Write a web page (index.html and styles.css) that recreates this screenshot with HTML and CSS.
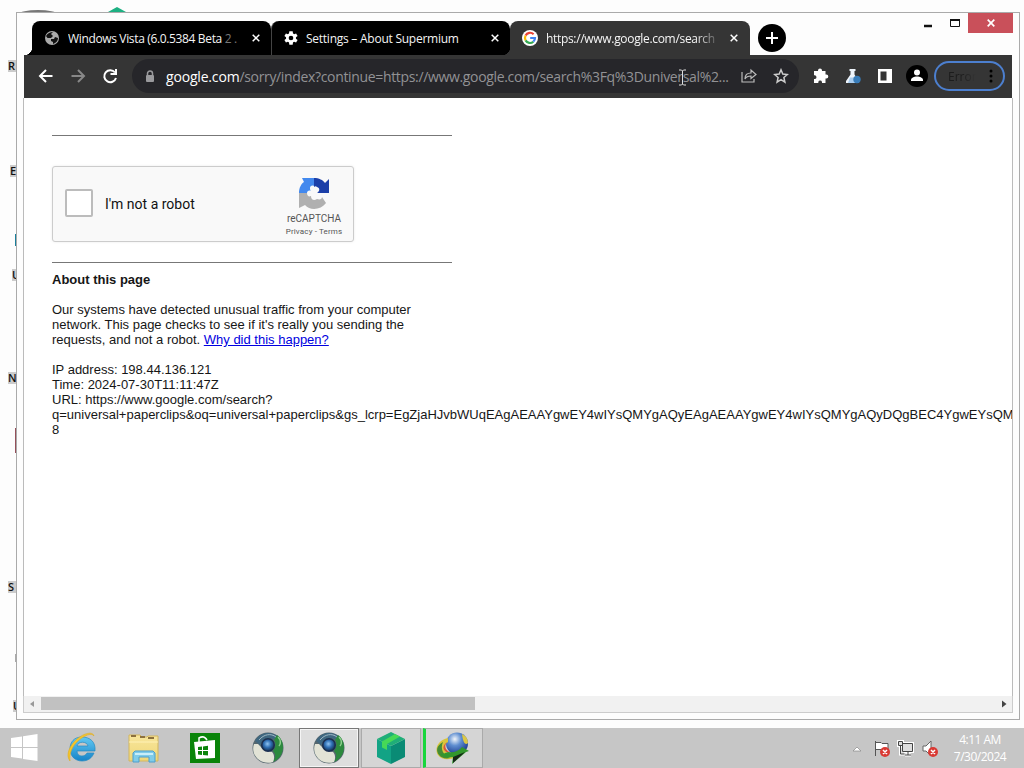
FILE: index.html
```
<!DOCTYPE html>
<html lang="en">

<head>
    <meta charset="utf-8">
    <title>https://www.google.com/search</title>
    <link rel="stylesheet" href="styles.css">
</head>

<body>
<div id="desktop">
    <!-- desktop icons behind the window -->
    <svg class="wallpaper" width="1024" height="728">
        <ellipse cx="38" cy="14" rx="19" ry="4" fill="#777"/>
        <path d="M108 12l9-5 9 5v3h-18z" fill="#1db082"/>
        <path d="M15 234h2v12h-2z" fill="#197f9b"/>
        <path d="M15 428h2v25h-2z" fill="#95505a"/>
        <path d="M15 654h2v8h-2z" fill="#aaa"/>
    </svg>
    <span class="label l1">R</span>
    <span class="label l2">E</span>
    <span class="label l3">U</span>
    <span class="label l4">N</span>
    <span class="label l5">S</span>
    <span class="label l6">U</span>

    <div class="window">
        <div class="titlebar">
            <div class="tabs">
                <div class="tab">
                    <svg class="favicon" width="16" height="16" viewBox="0 0 16 16"><circle cx="8" cy="8" r="7" fill="#aaa"/><path d="M2 6c2-3 4-4 7-4L7 4l2 2-2 2H3.500zM7 9h3l1-2 3 1c0 3-2 5-5 6v-2L7 11z" fill="#111"/></svg>
                    <span class="tab-title t1">Windows Vista (6.0.5384 Beta <i>2 .</i></span>
                    <svg class="close" width="8" height="8" viewBox="0 0 8 8"><path d="M.7.7l6.600 6.600M7.300.7L.7 7.300"/></svg>
                </div>
                <div class="tab second">
                    <svg class="favicon" width="16" height="16" viewBox="0 0 24 24"><path fill="#fff" d="M19.400 13a7.500 7.500 0 0 0 0-2l2.500-1.900-2.300-4-2.900 1.200a7 7 0 0 0-1.700-1L14.500 2h-5L9 5.300a7 7 0 0 0-1.700 1L4.400 5.100l-2.300 4L4.600 11a7.500 7.500 0 0 0 0 2l-2.500 1.900 2.300 4 2.900-1.200a7 7 0 0 0 1.700 1l.5 3.300h5l.5-3.300a7 7 0 0 0 1.700-1l2.900 1.200 2.300-4zM12 15.500a3.500 3.500 0 1 1 0-7 3.500 3.500 0 0 1 0 7z"/></svg>
                    <span class="tab-title t2">Settings – About Supermium</span>
                    <svg class="close" width="8" height="8" viewBox="0 0 8 8"><path d="M.7.7l6.600 6.600M7.300.7L.7 7.300"/></svg>
                </div>
                <div class="tab active">
                    <svg class="favicon" width="16" height="16" viewBox="0 0 16 16"><circle cx="8" cy="8" r="8" fill="#fff"/><g fill="none" stroke-width="2.200"><path d="M11.600 4.200A5 5 0 0 0 3.600 5.600" stroke="#ea4335"/><path d="M3.600 5.600a5 5 0 0 0 0 4.800" stroke="#fbbc05"/><path d="M3.600 10.400a5 5 0 0 0 7.700 1.300" stroke="#34a853"/><path d="M11.300 11.700A5 5 0 0 0 13 8H8.200" stroke="#4285f4"/></g></svg>
                    <span class="tab-title t3">https://www.google.com/search</span>
                    <svg class="close" width="8" height="8" viewBox="0 0 8 8"><path d="M.7.7l6.600 6.600M7.300.7L.7 7.300"/></svg>
                </div>
            </div>
            <div class="newtab"><svg width="12" height="12"><path d="M6 0v12M0 6h12" stroke="#fff" stroke-width="2"/></svg></div>
            <div class="controls">
                <svg width="58" height="20"><path d="M14 13h8" stroke="#111" stroke-width="2.500"/><path d="M40.500 7.500h9v6h-9z" fill="none" stroke="#111"/><path d="M40 7h10" stroke="#111" stroke-width="2"/></svg>
                <div class="win-close"><svg width="8" height="8"><path d="M.7.7l6.600 6.600M7.300.7L.7 7.300" stroke="#fff" stroke-width="1.700"/></svg></div>
            </div>
        </div>

        <div class="toolbar">
            <svg class="nav" width="108" height="32" fill="none" stroke-width="2">
                <path d="M28.500 15h-12M22 9l-6 6 6 6" stroke="#fff"/>
                <path d="M47.500 15h12M54 9l6 6-6 6" stroke="#888"/>
                <path d="M91 11.500a6 6 0 1 0 1 5.500M92 8v5h-5.500" stroke="#fff"/>
            </svg>
            <div class="omnibox">
                <svg class="lock" width="10" height="13"><path d="M2.500 5V3.500a2.500 2.500 0 0 1 5 0V5" fill="none" stroke="#9a9a9d" stroke-width="1.500"/><rect x="1" y="5" width="8" height="7" rx="1" fill="#9a9a9d"/></svg>
                <div class="url"><b>google.com</b><span>/sorry/index?continue=https://www.google.com/search%3Fq%3Duniversal%2...</span></div>
                <svg class="share" width="16" height="16" viewBox="0 0 16 16" fill="none" stroke="#bbb" stroke-width="1.200"><path d="M1 4v10h12v-3M4 11c0-4 2-6 6-6V2l5 4.500-5 4V8c-3 0-5 1-6 3z"/></svg>
                <svg width="16" height="16" viewBox="0 0 16 16" fill="none" stroke="#ccc" stroke-width="1.500"><path d="M8 1.800l1.800 4.300 4.600.4-3.500 3 1 4.600L8 11.700l-3.900 2.400 1-4.600-3.500-3 4.600-.4z"/></svg>
            </div>
            <div class="actions">
                <svg width="16" height="16" viewBox="0 0 16 16"><path d="M5 2.500a2 2 0 0 1 4 0V3h3.500v3.500h.8a2 2 0 0 1 0 4h-.8V15H9v-1a1.900 1.900 0 0 0-3.700 0v1H1v-4h1a1.900 1.900 0 0 0 0-3.700H1V3h4z" fill="#fff"/></svg>
                <svg width="16" height="16" viewBox="0 0 16 16"><path d="M4.500 1h6v2h-1v3.500l4 6.500v2H1v-2l4.500-6.500V3h-1z" fill="#eef4fb"/><path d="M5 9.500h5l3.500 4V15H3z" fill="#a9cdf0"/><circle cx="12" cy="11.500" r="3.700" fill="#387cb9"/></svg>
                <svg width="16" height="16" viewBox="0 0 16 16"><path d="M1 1h14v14H1z" fill="#fff"/><path d="M3.500 3.500h6v9h-6z" fill="#333"/></svg>
                <svg class="avatar" width="22" height="22"><circle cx="11" cy="11" r="11" fill="#000"/><circle cx="11" cy="7.500" r="3" fill="#fff"/><path d="M5 16v-1c0-2 3-3.500 6-3.500s6 1.500 6 3.500v1z" fill="#fff"/></svg>
                <div class="error"><span>Error</span><svg width="4" height="14"><circle cx="2" cy="2" r="1.500"/><circle cx="2" cy="7" r="1.500"/><circle cx="2" cy="12" r="1.500"/></svg></div>
            </div>
        </div>

        <div class="page">
            <hr>
            <div class="captcha">
                <div class="checkbox"></div>
                <div class="robot">I'm not a robot</div>
                <div class="brand">
                    <svg width="32" height="32" viewBox="0 0 32 32">
                        <path d="M4 1h12v8c-2-1-4 0-4 2 0 1 0 2 1 3-2-1-4 0-4 2H1C1 11 3 7 6 5z" fill="#4389ee"/>
                        <path d="M16 1c5 0 9 2 11 5l4-4v14H19c3-2 3-5 0-6-1-1-2-1-3 0z" fill="#1c3fa8"/>
                        <path d="M1 16h8c0 3 2 4 4 3 0 4 3 5 6 3 3 1 5 0 5-2l4 6c-5 7-16 8-21 2l-6 3z" fill="#b0b0b0"/>
                    </svg>
                    <div class="name">reCAPTCHA</div>
                    <div class="terms">Privacy - Terms</div>
                </div>
            </div>
            <hr>
            <div class="text">
                <b>About this page</b><br><br>
                Our systems have detected unusual traffic from your computer<br>
                network. This page checks to see if it's really you sending the<br>
                requests, and not a robot. <a href="#">Why did this happen?</a><br><br>
                IP address: 198.44.136.121<br>
                Time: 2024-07-30T11:11:47Z<br>
                URL: https://www.google.com/search?<br>
                q=universal+paperclips&amp;oq=universal+paperclips&amp;gs_lcrp=EgZjaHJvbWUqEAgAEAAYgwEY4wIYsQMYgAQyEAgAEAAYgwEY4wIYsQMYgAQyDQgBEC4YgwEYsQM<br>
                8
            </div>
        </div>
        <div class="scrollbar">
            <svg width="17" height="16"><path d="M10 5v6L6 8z" fill="#999"/></svg>
            <div class="thumb"></div>
            <svg width="17" height="16"><path d="M7 4.500v7L11.500 8z" fill="#444"/></svg>
        </div>
    </div>

    <svg class="cursor" width="9" height="17"><path d="M1 1h2.500l1 1 1-1H8M4.500 2v13M1 16h2.500l1-1 1 1H8" fill="none" stroke="#ddd"/></svg>
</div>

<div id="taskbar">
    <svg width="0" height="0" class="defs">
        <defs>
            <radialGradient id="ball" cx=".45" cy=".4" r=".65"><stop offset="0" stop-color="#8fc4f2"/><stop offset=".5" stop-color="#2f6fb4"/><stop offset="1" stop-color="#143256"/></radialGradient>
            <radialGradient id="globe" cx=".4" cy=".3" r=".75"><stop offset="0" stop-color="#f2f6fb"/><stop offset=".4" stop-color="#5f8ed0"/><stop offset="1" stop-color="#16348a"/></radialGradient>
            <linearGradient id="ie" x2="0" y2="1"><stop offset="0" stop-color="#62c9f3"/><stop offset="1" stop-color="#1683c8"/></linearGradient>
            <linearGradient id="folder" x2="0" y2="1"><stop offset="0" stop-color="#f8e69c"/><stop offset="1" stop-color="#efd778"/></linearGradient>
            <symbol id="supermium" viewBox="0 0 32 32">
                <circle cx="16" cy="16" r="15.500" fill="#55676f"/>
                <path d="M3 9C8-1 21-1 26 5l-3 3c-6-4-12-2-15 5z" fill="#3f6780"/>
                <path d="M7 8c5-6 12-7 17-3" fill="none" stroke="#9db6c2"/>
                <path d="M25 3c9 6 8 22-4 27 3-5 3-8 0-11 3-4 3-8 1-11z" fill="#2c8a3e"/>
                <path d="M26 5c3 3 3 7 1 9" fill="none" stroke="#8fd08f" stroke-width="1.500"/>
                <path d="M2 12c-4 11 7 22 19 18 2-4 1-8-1-10l-8-2-6-6z" fill="#e2e3d6"/>
                <circle cx="16" cy="13" r="7" fill="#1b2f50"/>
                <circle cx="16" cy="13" r="5.500" fill="url(#ball)"/>
            </symbol>
        </defs>
    </svg>
    <div class="task start"><svg width="28" height="28" viewBox="0 0 28 28" fill="#fff"><path d="M1 4l11-1.500V13H1zM13 2.300L27.500 0v13H13zM1 14h11v10.500L1 23zM13 14h14.500v13L13 25z"/></svg></div>
    <div class="task"><svg width="32" height="32" viewBox="0 0 32 32"><path d="M17 5C9 5 5 10 5 17s5 12 12 12c6 0 10-3 12-8h-7c-1 2-3 3-5 3-3 0-5-2-5-5h18C31 10 25 5 17 5zm-5 9c1-5 10-5 11 0z" fill="url(#ie)" stroke="#258bc2" stroke-width=".7"/><path d="M5 29C0 23 5 13 12 7S28-1 29 4c-3-4-10 0-16 5S4 22 5 29z" fill="#f4c62c" stroke="#dfab22" stroke-width=".6"/></svg></div>
    <div class="task"><svg width="32" height="32" viewBox="0 0 32 32"><path d="M1 3h11l2 2h5l1-1h10v25H1z" fill="url(#folder)" stroke="#d3b65d"/><path d="M3 3h5v2H3zM12 4h5v2h-5zM20 5h6v2h-6z" fill="#8c713e"/><path d="M1 10h29" stroke="#fff2b5"/><path d="M5 30v-9l2-2h18l2 2v9h-6v-5H11v5z" fill="#80cce8" stroke="#4d9ecd"/><path d="M7 22h18" stroke="#c9eef9" stroke-width="2"/></svg></div>
    <div class="task store"><svg width="30" height="30" viewBox="0 0 30 30"><path d="M0 0h30v30H0z" fill="#098409"/><path d="M4 9l21-2v18L6 26z" fill="#fff"/><path d="M9 9V5q5-3 8 2" fill="none" stroke="#fff" stroke-width="1.500"/><path d="M8 14l4-.5V17H8zM13 13.400l5-.6V17h-5zM8 18h4v4l-4-.5zM13 18h5v4.500l-5-.5z" fill="#098409"/></svg></div>
    <div class="task"><svg width="32" height="32"><use href="#supermium"/></svg></div>
    <div class="task open current"><svg width="32" height="32"><use href="#supermium"/></svg></div>
    <div class="task open"><svg width="32" height="32" viewBox="0 0 32 32"><path d="M2 7l14 7v18L2 25z" fill="#12a385"/><path d="M30 7l-14 7v18l14-7z" fill="#0a8b75"/><path d="M2 7l14-7 14 7-14 7z" fill="#1fae78"/><path d="M7 9.500L20 2l5 2.500L12 12v6l-5-2.500z" fill="#46d957"/></svg></div>
    <div class="task open download"><svg width="34" height="32" viewBox="0 0 34 32"><circle cx="22" cy="11.500" r="11" fill="url(#globe)"/><path d="M27 2c4 2 6 5 6 9-3 3-5-1-6-9z" fill="#dcc845"/><path d="M13 6C3 8-1 17 3 23s14 5 19 1l-8-2c-7-3-6-9-1-12z" fill="#d8c53c"/><path d="M8 10c-7 4-7 9-4 13 2 3 7 4 11 3-7-3-10-9-7-16z" fill="#458c35"/><path d="M12 10c-3 4-2 8 4 11l-5-1c-4-3-3-7 1-10z" fill="#d95837"/><path d="M13 20c6 1 11-1 14-5l7 4-3 1-14 12 1-7c-5 1-10 0-13-3 3 0 5-1 8-2z" fill="#32972c"/><path d="M18 25l12-5-12 11z" fill="#172719"/></svg></div>
    <div class="tray">
        <svg width="88" height="20">
            <path d="M1 13l4-4 4 4z" fill="#fff" stroke="#888" stroke-width=".7"/>
            <path d="M23.500 3v15M24 4.500h5l1 1h6v7h-6l-1-1h-5" fill="#fff" stroke="#555"/>
            <path d="M50.500 5.500h10v8h-10zM53 17h6M56 14v3M46.500 3.500h4v4h-4zM48.500 8v8h4" fill="#ddd" stroke="#fff" stroke-width="3"/><path d="M50.500 5.500h10v8h-10zM53 17h6M56 14v3M46.500 3.500h4v4h-4zM48.500 8v8h4" fill="#ddd" stroke="#444"/>
            <path d="M71 8h3l5-5v15l-5-5h-3z" fill="#fff" stroke="#666"/>
            <g fill="#d93a34"><circle cx="33" cy="14" r="5"/><circle cx="81" cy="14" r="5"/></g>
            <path d="M31 12l4 4m0-4l-4 4M79 12l4 4m0-4l-4 4" stroke="#fff" stroke-width="1.500"/>
        </svg>
        <div class="clock">4:11 AM<br>7/30/2024</div>
    </div>
</div>
</body>

</html>
```
FILE: styles.css
```
* {
    box-sizing: border-box;
}

body {
    margin: 0;
    width: 1024px;
    height: 768px;
    overflow: hidden;
    background: #fdfdfd;
    font-family: "Open Sans", "Noto Sans", sans-serif;
}

svg {
    display: block;
    flex: none;
}

#desktop {
    position: relative;
    height: 728px;
}

.wallpaper {
    position: absolute;
}

/* the window lies over the right part of each label */
.label {
    position: absolute;
    left: 8px;
    font-size: 11px;
    font-weight: 600;
    line-height: 12px;
    padding-right: 3px;
    background: #ccc;
    color: #111;
}

.l1 { top: 60px; }
.l2 { top: 165px; left: 10px; }
.l3 { top: 269px; left: 12px; }
.l4 { top: 372px; }
.l5 { top: 581px; }
.l6 { top: 700px; left: 13px; }

.window {
    position: absolute;
    left: 16px;
    top: 12px;
    width: 1004px;
    height: 708px;
    padding: 0 7px 7px;
    border: 1px solid #aaa;
    background: #fdfdfd;
}

.titlebar {
    display: flex;
    height: 42px;
    padding-left: 8px;
    background: radial-gradient(circle at 0 0, transparent 8px, #000 8.5px) 0 34px / 8px 8px no-repeat;
}

.tabs {
    display: flex;
    margin-top: 8px;
}

.tab {
    display: flex;
    align-items: center;
    width: 239px;
    height: 34px;
    padding: 0 11px 0 12px;
    border-radius: 8px 8px 0 0;
    background: #000;
    color: #f5f5f5;
}

.tab.second {
    border-radius: 8px 8px 0 0;
    border-left: 1px solid #444;
    background: radial-gradient(circle at 0 0, #000 8px, #353535 8.5px) 100% 100% / 8px 8px no-repeat, #000;
    padding-left: 11px;
}

.tab.active {
    width: 240px;
    background: #353535;
    padding: 0 12px;
}

.tab-title {
    flex: 1;
    margin-left: 8px;
    overflow: hidden;
    white-space: nowrap;
    font-size: 12px;
}

.t1 { letter-spacing: -0.35px; }
.t1 i { font-style: normal; color: #777; }
.t2 { margin-left: 7px; letter-spacing: -0.25px; }

.t3 {
    letter-spacing: -0.32px;
    -webkit-mask-image: linear-gradient(90deg, #000 150px, transparent 175px);
    mask-image: linear-gradient(90deg, #000 150px, transparent 175px);
}

.close {
    margin-left: 8px;
    stroke: #fff;
    stroke-width: 1.5;
}

.newtab {
    display: flex;
    align-items: center;
    justify-content: center;
    width: 28px;
    height: 28px;
    margin: 11px 0 0 8px;
    border-radius: 50%;
    background: #000;
}

.controls {
    display: flex;
    margin-left: auto;
}

.win-close {
    display: flex;
    align-items: center;
    justify-content: center;
    width: 45px;
    height: 20px;
    margin-right: -1px;
    background: #c9505a;
}

.toolbar {
    display: flex;
    height: 43px;
    padding-top: 4px;
    background: #353535;
}

.nav {
    margin-top: 2px;
}

.omnibox {
    display: flex;
    align-items: center;
    width: 667px;
    height: 34px;
    padding: 0 10px 0 13px;
    border-radius: 17px;
    background: #26262a;
}

.url {
    width: 572px;
    margin-left: 11px;
    white-space: nowrap;
    font-size: 14px;
    letter-spacing: -0.34px;
    color: #929295;
}

.url b {
    font-weight: 400;
    color: #fff;
    letter-spacing: -0.18px;
}

.share {
    margin: 0 16px 0 4px;
}

.actions {
    display: flex;
    flex: 1;
    align-items: center;
    height: 34px;
    padding-left: 14px;
    gap: 16px;
}

.avatar {
    margin-left: -3px;
}

.error {
    display: flex;
    align-items: center;
    justify-content: space-between;
    width: 71px;
    height: 30px;
    margin-left: -10px;
    padding: 0 10px 0 12px;
    border: 2px solid #4c7fcf;
    border-radius: 15px;
    font-size: 12px;
    color: #1c1c1c;
}

.error span {
    -webkit-mask-image: linear-gradient(90deg, #000 14px, transparent 28px);
    mask-image: linear-gradient(90deg, #000 14px, transparent 28px);
}

.page {
    height: 598px;
    margin: 0 -1px;
    padding: 37px 0 0 28px;
    overflow: hidden;
    border: solid #bbb;
    border-width: 0 1px;
    background: #fff;
    font-family: "Liberation Sans", Arial, sans-serif;
}

hr {
    width: 400px;
    height: 1px;
    margin: 0;
    border: 0;
    background: #777;
}

.captcha {
    display: flex;
    width: 302px;
    height: 76px;
    margin: 30px 0 20px;
    padding-left: 12px;
    border: 1px solid #ccc;
    border-radius: 3px;
    background: #f9f9f9;
    box-shadow: 0 0 3px rgba(0, 0, 0, 0.08);
}

.checkbox {
    width: 28px;
    height: 28px;
    margin-top: 22px;
    border: 2px solid #bcbcbc;
    border-radius: 2px;
    background: #fff;
}

.robot {
    width: 175px;
    margin-left: 12px;
    padding-top: 28px;
    font: 14px/18px Roboto, sans-serif;
    color: #111;
}

.brand {
    display: flex;
    flex-direction: column;
    align-items: center;
    width: 68px;
    padding-top: 10px;
    white-space: nowrap;
    font-family: Roboto, sans-serif;
    color: #555;
}

.name {
    margin-top: 3px;
    font-size: 10px;
    line-height: 14px;
}

.terms {
    font-size: 8px;
    line-height: 11px;
    letter-spacing: 0.15px;
}

.text {
    margin-top: 9px;
    font-size: 13px;
    line-height: 15px;
    white-space: nowrap;
    color: #161616;
}

.text a {
    color: #0000e0;
}

.scrollbar {
    display: flex;
    justify-content: space-between;
    height: 17px;
    margin: 0 -1px;
    border: 1px solid #ccc;
    border-top: 0;
    background: #f1f1f1;
}

.thumb {
    width: 434px;
    height: 13px;
    margin: 1px auto 0 0;
    background: #c1c1c1;
}

.cursor {
    position: absolute;
    left: 678px;
    top: 69px;
}

#taskbar {
    position: relative;
    display: flex;
    height: 40px;
    padding-left: 10px;
    background: #c6c6c6;
}

.defs {
    position: absolute;
}

.task {
    display: flex;
    align-items: center;
    justify-content: center;
    width: 62px;
    height: 40px;
}

.start {
    width: 41px;
    justify-content: flex-start;
}

.start + .task {
    padding-right: 3px;
}

.store {
    padding-right: 2px;
}

.open {
    width: 60px;
    margin-right: 2px;
    border: 1px solid #aaa;
    background: #d5d5d5;
}

.current {
    border-color: #777;
    background: #dedede;
    box-shadow: inset 0 0 0 1px #f5f5f5;
}

.download {
    padding-right: 4px;
    border-left: 3px solid #18d63c;
}

.tray {
    display: flex;
    align-items: center;
    margin-left: auto;
    padding-right: 16px;
}

.clock {
    width: 56px;
    margin-left: 12px;
    text-align: center;
    font-size: 12px;
    line-height: 17px;
    letter-spacing: -0.5px;
    color: #fff;
}
```
